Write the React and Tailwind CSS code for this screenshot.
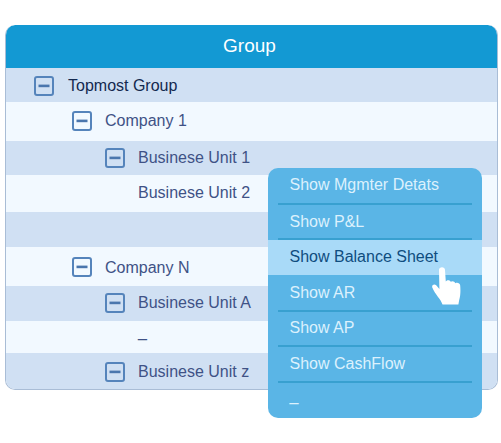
const rows = [
  { label: "Topmost Group", h: "h-[34px]", pl: "pl-[28px]", gap: "gap-[14px]", dark: true, top: true, icon: true, nudge: "mt-[1px]", iconNudge: "mt-[2px]" },
  { label: "Company 1", h: "h-[39px]", pl: "pl-[66px]", gap: "gap-[13px]", icon: true, nudge: "-mt-[2px]", iconNudge: "-mt-[1px]" },
  { label: "Businese Unit 1", h: "h-[34px]", pl: "pl-[99px]", gap: "gap-[13px]", dark: true, icon: true, iconNudge: "-mt-[1px]" },
  { label: "Businese Unit 2", h: "h-[37px]", pl: "pl-[132px]", nudge: "-mt-[2px]" },
  { label: "", h: "h-[35px]", pl: "pl-[100px]", dark: true },
  { label: "Company N", h: "h-[39px]", pl: "pl-[66px]", gap: "gap-[13px]", icon: true, nudge: "mt-[2px]", iconNudge: "mt-[1px]" },
  { label: "Businese Unit A", h: "h-[35px]", pl: "pl-[99px]", gap: "gap-[13px]", dark: true, icon: true, nudge: "-mt-[2px]", iconNudge: "-mt-[1px]" },
  { label: "_", h: "h-[32px]", pl: "pl-[132px]", nudge: "-mt-[10px]" },
  { label: "Businese Unit z", h: "h-[36px]", pl: "pl-[99px]", gap: "gap-[13px]", dark: true, icon: true, nudge: "mt-[1px]", iconNudge: "mt-[1px]" },
];

const menu = [
  { label: "Show Mgmter Detats", h: "h-[37px]", nudge: "-mt-[2px]" },
  { label: "Show P&L", h: "h-[35px]", nudge: "mt-[1px]" },
  { label: "Show Balance Sheet", h: "h-[35px]", active: true, nudge: "-mt-[2px]" },
  { label: "Show AR", h: "h-[37px]", nudge: "mt-[1px]" },
  { label: "Show AP", h: "h-[35px]", nudge: "-mt-[1px]" },
  { label: "Show CashFlow", h: "h-[36px]" },
  { label: "_", h: "h-[35px]", last: true, nudge: "-mt-[9px]" },
];

function MinusBox({ className }) {
  return (
    <svg width="20" height="20" viewBox="0 0 20 20" className={`shrink-0 ${className ?? ""}`}>
      <rect x="1" y="1" width="18" height="18" rx="2" fill="none" stroke="#5584bb" strokeWidth="2" />
      <rect x="4.5" y="8.6" width="11" height="2.6" fill="#4a76ad" />
    </svg>
  );
}

function Hand() {
  return (
    <svg width="30" height="38" viewBox="0 0 30 38" className="absolute left-[432px] top-[267px]">
      <path
        d="M7 3C7 -.6 13 -.6 13 3L13.8 14.5C15 12.6 18 12.8 18.8 14.8C20 13.6 22.6 14 23.4 16.2C24.8 15.2 28 15.8 28.2 18.4C28.6 23 28.6 29 27.2 33L26.4 37.5H10.5C9.4 34.5 8 32.6 6 30C3.8 27 1.4 23.4 .3 20.6C-.6 18 2.4 16.4 4.2 18.2L7.4 22Z"
        fill="#ffffff"
      />
    </svg>
  );
}

export default function App() {
  return (
    <div className="relative h-[443px] w-[501px] bg-white font-['Liberation_Sans',Arial,sans-serif] text-base">
      <div className="pl-[5px] pt-[25px]">
        <div className="w-[493px] overflow-hidden rounded-[10px] border-x border-b border-[#a9bdd6]">
          <div className="-mx-px flex h-[43px] items-center justify-center rounded-t-[10px] bg-[#1399d3] pr-[4px] text-[19px] text-white">
            Group
          </div>
          {rows.map((row, i) => (
            <div
              key={i}
              className={`flex items-center ${row.gap ?? ""} ${row.h} ${row.pl} ${row.dark ? "bg-[#d0e0f3]" : "bg-[#f2f9ff]"} ${row.top ? "text-[#13294f]" : "text-[#3f5286]"}`}
            >
              {row.icon && <MinusBox className={row.iconNudge} />}
              <span className={row.nudge}>{row.label}</span>
            </div>
          ))}
        </div>
      </div>

      <div className="absolute left-[268px] top-[168px] w-[214px] overflow-hidden rounded-[10px] bg-[#5ab5e6]">
        {menu.map((item) => (
          <div key={item.label} className={item.active ? "bg-[#a9daf8]" : "px-[10px]"}>
            <div
              className={`flex items-center ${item.h} ${item.active ? "pl-[21.5px] text-[#0f4d7f]" : "pl-[11.5px] text-[#dcf1fd]"} ${item.active || item.last ? "" : "border-b-2 border-[#38a0d0]"}`}
            >
              <span className={item.nudge}>{item.label}</span>
            </div>
          </div>
        ))}
      </div>
      <Hand />
    </div>
  );
}
